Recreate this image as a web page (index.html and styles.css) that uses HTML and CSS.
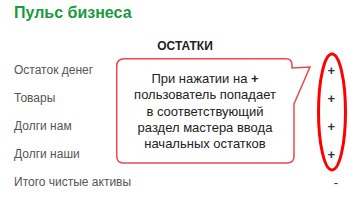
FILE: index.html
```html
<!DOCTYPE html>
<html lang="ru">
<head>
<meta charset="utf-8">
<link rel="stylesheet" href="styles.css">
</head>
<body>
<div class="page">
  <h1 class="title">Пульс бизнеса</h1>
  <div class="heading">ОСТАТКИ</div>
  <div class="rows">
    <div class="row"><span class="label">Остаток денег</span><span class="val">+</span></div>
    <div class="row"><span class="label">Товары</span><span class="val">+</span></div>
    <div class="row"><span class="label">Долги нам</span><span class="val">+</span></div>
    <div class="row"><span class="label">Долги наши</span><span class="val">+</span></div>
    <div class="row"><span class="label">Итого чистые активы</span><span class="val val-dash">-</span></div>
  </div>

  <svg class="ring" width="36" height="126" viewBox="0 0 36 126">
    <ellipse cx="18" cy="63" rx="13.5" ry="58" fill="none" stroke="#ff0000" stroke-width="3"/>
  </svg>

  <div class="callout">
    <svg class="callout-shape" width="200" height="112" viewBox="0 0 200 112">
      <path d="M8.5 0.75 H170 Q176 0.75 176 7 V10 L194 9 L178 46 V98 Q178 105 171 105 H7.5 Q0.75 105 0.75 98 V8 Q0.75 0.75 8.5 0.75 Z" fill="#ffffff" stroke="#e84a4f" stroke-width="1.5" stroke-linejoin="miter"/>
    </svg>
    <p class="callout-text">При нажатии на <b>+</b><br>пользователь попадает<br>в соответствующий<br>раздел мастера ввода<br>начальных остатков</p>
  </div>
</div>
</body>
</html>
```

FILE: styles.css
```css
html, body {
  margin: 0;
  padding: 0;
  background: #ffffff;
}

.page {
  position: relative;
  width: 360px;
  height: 200px;
  padding: 0 14px;
  box-sizing: border-box;
  font-family: "Liberation Sans", Arial, sans-serif;
  overflow: hidden;
}

.title {
  margin: 0;
  padding-top: 3px;
  font-size: 16px;
  line-height: 20px;
  font-weight: bold;
  color: #1a9a3e;
}

.heading {
  margin-top: 15px;
  padding-left: 10px;
  text-align: center;
  font-size: 12px;
  line-height: 16px;
  font-weight: bold;
  color: #222222;
}

.rows {
  margin-top: 2px;
  display: flex;
  flex-direction: column;
}

.row {
  height: 28px;
  display: flex;
  align-items: center;
  justify-content: space-between;
  padding-right: 11px;
}

.label {
  font-size: 12px;
  color: #555555;
}

.val {
  font-size: 13px;
  font-weight: bold;
  color: #333333;
}

.val-dash {
  font-weight: normal;
  margin-right: -3px;
}

.ring {
  position: absolute;
  left: 314px;
  top: 49px;
}

.callout {
  position: absolute;
  left: 116px;
  top: 58px;
  width: 178px;
  height: 105px;
}

.callout-shape {
  position: absolute;
  left: 0;
  top: 0;
  overflow: visible;
}

.callout-text {
  position: relative;
  margin: 0;
  padding-top: 13px;
  text-align: center;
  font-size: 13px;
  line-height: 16.25px;
  color: #222222;
}
```
